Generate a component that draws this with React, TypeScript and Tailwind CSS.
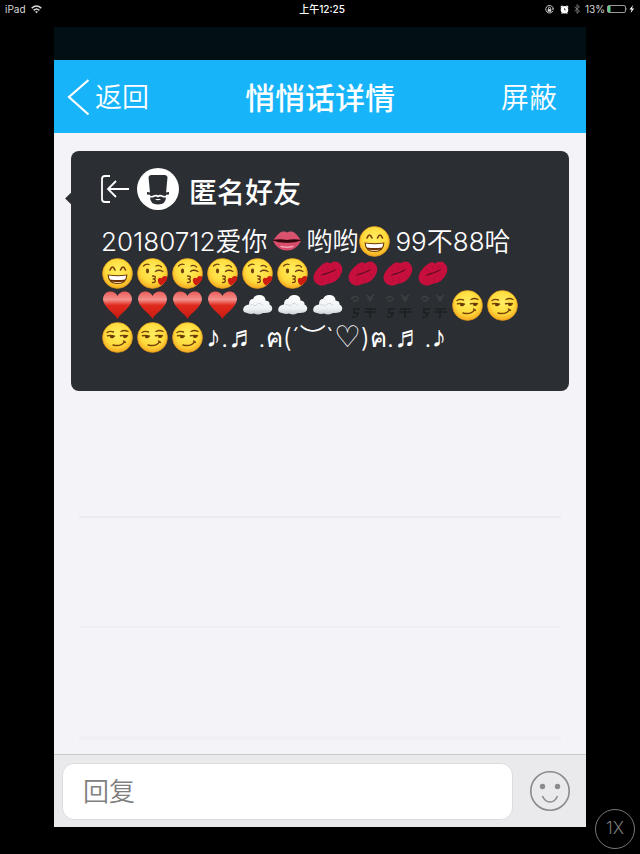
import type { ReactNode } from "react";

type EmojiProps = { label: string; children: ReactNode };

function Emoji({ label, children }: EmojiProps) {
  return (
    <svg role="img" aria-label={label} viewBox="0 0 35 32" className="inline-block h-8 w-[35px] align-top">
      {children}
    </svg>
  );
}

function Face() {
  return <circle cx="16.500" cy="15.500" r="15" fill="url(#face)" stroke="#e49a1a" strokeWidth="0.6" />;
}

function Grin() {
  return (
    <Emoji label="大笑">
      <Face />
      <g fill="none" stroke="#7a3d06" strokeWidth="1.6" strokeLinecap="round">
        <path d="M9 12Q11.500 6 14 12M19.500 12Q22 6 24.500 12" />
      </g>
      <path d="M6.500 16.500Q16.500 18 26.500 16.500Q26 26 16.500 26Q7 26 6.500 16.500Z" fill="#6b3208" />
      <path d="M7.800 17.600Q16.500 19 25.200 17.600Q25 20 24 21.500Q16.500 22.500 9 21.500Q8 20 7.800 17.600Z" fill="#fff" />
      <path d="M10.500 23.500Q16.500 24.500 22.500 23.500Q20 25 16.500 25Q13 25 10.500 23.500Z" fill="#f3d9b0" />
    </Emoji>
  );
}

function BlowKiss() {
  return (
    <Emoji label="飞吻">
      <Face />
      <ellipse cx="11.500" cy="13" rx="1.600" ry="2.400" fill="#70400c" />
      <g fill="none" stroke="#70400c" strokeWidth="1.3" strokeLinecap="round">
        <path d="M7.500 8Q10 5.500 13 6.500M19.500 13.500Q22.500 11 27 13.500M20 8Q23 6.500 25.500 9" />
        <path d="M16.500 18Q20.500 18 19 20.300L17.500 21L19 21.600Q20.500 24.500 16.500 24.500" />
      </g>
      <path d="M25 27.500Q21.500 25 21.800 21.500Q23 18.500 25.500 20.300Q28 16.500 31 18.800Q32.500 23 25 27.500Z" fill="#cb1d12" />
    </Emoji>
  );
}

function Smirk() {
  return (
    <Emoji label="得意">
      <Face />
      <g fill="none" stroke="#754208" strokeWidth="1.4" strokeLinecap="round">
        <path d="M6 10.500Q9 8.500 12.500 10M20 9.500Q23.500 7.500 27 9.500" />
        <path d="M6.500 13.800Q10 13 13.500 14.200M19.500 13.800Q23 13 26.500 13.800" />
        <path d="M12 23Q20 25 23.500 19.800" />
        <path d="M22.500 19L24.500 20.400" />
      </g>
      <ellipse cx="11" cy="14.900" rx="2" ry="1.400" fill="#663606" />
      <ellipse cx="24" cy="14.700" rx="2" ry="1.400" fill="#663606" />
    </Emoji>
  );
}

function Mouth() {
  return (
    <span className="mx-[2px]">
      <Emoji label="嘴">
        <path d="M4 15Q9 6.500 13.500 5.500Q16.500 5 18 6.500Q20 5 23 5.500Q27.500 6.500 32 15Q27 24.500 18 24.500Q8.500 24.500 4 15Z" fill="url(#mouth)" />
        <path d="M3 14.300Q10 12.500 18 14Q26 12.500 33 14.300Q26 17 18 16.800Q10 17 3 14.300Z" fill="#30070d" />
        <path d="M12 20.500Q18 22 24 20.500" fill="none" stroke="#f2a3b4" strokeWidth="1.3" strokeLinecap="round" />
      </Emoji>
    </span>
  );
}

function KissMark() {
  return (
    <Emoji label="唇印">
      <path d="M2.500 19Q3.500 12 12 6Q16 3 19 5.500Q23 2.500 27 4Q32.500 8 31 14Q27 25 16 26Q12 28.500 8 27Q2.500 25 2.500 19Z" fill="#c60f3d" />
      <path d="M9 18Q13 14.500 17.500 14.500Q22 11.500 26 11Q23 13.500 20 14.500Q15 16.500 9 18Z" fill="#5e0d23" />
      <path d="M11 10L13 14M16 8L17.500 13M23 7L22 11M12 20L11 25M18 19L18.500 25M24 16L26 19" fill="none" stroke="#b40e39" strokeWidth="0.800" />
    </Emoji>
  );
}

function Heart() {
  return (
    <Emoji label="红心">
      <path d="M16.500 29C13.500 23 3 18 2 9.500C2 0 13.500-1 16.500 6C19.500-1 31 0 31 9.500C30 18 19.500 23 16.500 29Z" fill="url(#heart)" />
    </Emoji>
  );
}

function Cloud() {
  return (
    <Emoji label="云">
      <path d="M6 23Q1 22.500 2.500 18Q3.500 15 8 14.500Q8 9 12 9Q14 4.500 19 5Q24.500 5.500 24.500 10.500Q29 11 28.500 14.500Q32 16 31 20Q29.500 23.500 22 23Q18 25.500 13 23.500Q10 24.500 6 23Z" fill="url(#cloud)" />
      <path d="M9 15Q12 13.500 14 16Q18 11 22 15.500" fill="none" stroke="#d3d9df" strokeWidth="1" />
    </Emoji>
  );
}

function Symbols() {
  return (
    <Emoji label="符号">
      <g fill="none" stroke="#404447" strokeWidth="1.2">
        <path d="M5 9L9 6L13 9M7 10Q9 12 12 10M20 5L24 8L28 5M21 9H27M24 8V12" />
      </g>
      <g fill="none" stroke="#1e2023" strokeWidth="1.700">
        <path d="M7 19H14M8 19V23H12L10 27M6 27H9M19 19H30M18 22H31M24 19V28" />
      </g>
    </Emoji>
  );
}

function Note({ children }: { children: ReactNode }) {
  return <span className="font-['DejaVu_Sans',sans-serif] text-[30px] leading-none">{children}</span>;
}

function times(count: number, render: (key: number) => ReactNode) {
  return Array.from({ length: count }, (_, i) => render(i));
}

function StatusBar() {
  return (
    <div className="grid h-[27px] grid-cols-3 items-start px-[5px] pt-[2px] text-[10px] leading-[14px] text-[#d8d8d8]">
      <div className="flex items-center gap-[5px]">
        <span>iPad</span>
        <svg viewBox="0 0 12 10" className="h-[9px] w-[11px]" fill="none" stroke="currentColor" strokeWidth="1.7" aria-label="Wi-Fi">
          <path d="M0.700 3.500Q6-1.200 11.300 3.500M2.800 5.900Q6 3 9.200 5.900" />
          <path d="M4.400 7.500Q6 6 7.600 7.500L6 9.300Z" fill="currentColor" stroke="none" />
        </svg>
      </div>
      <span className="pl-1 text-center font-medium text-white">上午12:25</span>
      <div className="flex items-center justify-end">
        <svg viewBox="0 0 10 10" className="mr-[6px] size-[9px]" fill="none" stroke="currentColor" aria-label="方向锁定">
          <path d="M8.800 6.500A4.200 4.200 0 1 1 9.200 4.500M7.800 4.200L9.200 5L10 3.700" />
          <path d="M3 4.600H7V7.500H3Z" fill="currentColor" stroke="none" />
          <path d="M3.900 4.600V3.600A1.100 1.100 0 0 1 6.100 3.600V4.600" />
        </svg>
        <svg viewBox="0 0 10 10" className="mr-[4px] size-[9px]" aria-label="闹钟">
          <circle cx="5" cy="5.200" r="4.200" fill="#fff" />
          <path d="M0.800 2.600L2.800 0.800M9.200 2.600L7.200 0.800M1.800 9.500L2.800 8.500M8.200 9.500L7.200 8.500" stroke="#fff" strokeWidth="1.300" />
          <path d="M5 3.400V5.400H6.800" fill="none" stroke="#333" strokeWidth="0.800" />
        </svg>
        <svg viewBox="0 0 8 10" className="mr-[4px] h-[10px] w-[8px]" fill="none" stroke="#777" aria-label="蓝牙">
          <path d="M1.500 2.800L6.500 7.200L4 9.300V0.700L6.500 2.800L1.500 7.200" />
        </svg>
        <span>13%</span>
        <svg viewBox="0 0 28 10" className="ml-[2px] h-[10px] w-[28px]" aria-label="电池">
          <rect x="0.500" y="1.500" width="18" height="7" rx="1.500" fill="none" stroke="#999" />
          <rect x="1" y="2" width="2.500" height="6" fill="#5fc98a" />
          <path d="M19.500 3.700Q21 5 19.500 6.300Z" fill="#aaa" />
          <path d="M26 1L22.500 5.600H24.600L23.600 9L27.200 4.400H25Z" fill="#fff" />
        </svg>
      </div>
    </div>
  );
}

function Header() {
  return (
    <header className="flex h-[73px] items-center justify-between bg-[#18b4fa] pt-[2px] pr-[29px] pl-[13px] text-white">
      <button type="button" className="flex flex-1 items-center gap-1 text-[27px] leading-8 font-[350]">
        <svg viewBox="0 0 24 38" className="h-[38px] w-6" fill="none" stroke="currentColor" strokeWidth="2.200" aria-hidden="true">
          <path d="M21.500 1L2 18L21.500 35.500" />
        </svg>
        返回
      </button>
      <h1 className="pl-4 text-[30px] leading-8 font-medium">悄悄话详情</h1>
      <button type="button" className="flex-1 text-right text-[28px] leading-8 font-[350]">屏蔽</button>
    </header>
  );
}

function Message() {
  return (
    <article className="relative min-h-[240px] rounded-lg bg-[#2b2e33] px-[30px] pt-4 text-white">
      <span className="absolute top-[43px] -left-[4px] size-[9px] rotate-45 bg-[#2b2e33]" />
      <div className="flex h-11 items-center">
        <svg viewBox="0 0 29 28" className="mr-[7px] h-7 w-[29px]" fill="none" stroke="currentColor" strokeWidth="1.800" aria-hidden="true">
          <path d="M9 1H4Q1 1 1 4V24Q1 27 4 27H9M28 14H8M15 6L7 14L15 22" />
        </svg>
        <svg viewBox="0 0 42 42" className="mr-[10px] size-[42px]" role="img" aria-label="匿名头像">
          <circle cx="21" cy="21" r="21" fill="#fff" />
          <path d="M11.500 9Q12 7 14.500 7H27.500Q30 7 30.500 9L29 25H13Z" fill="#2b2e33" />
          <path d="M10 24Q21 26 32 24V26.500Q21 28 10 26.500Z" fill="#2b2e33" />
          <path d="M13 25H29V29Q29 36.500 21 36.500Q13 36.500 13 29Z" fill="#2b2e33" />
          <path d="M12 28Q14.500 29.500 17 28Q19.500 27 21 28.500Q22.500 27 25 28Q27.500 29.500 30 28" fill="none" stroke="#fff" strokeWidth="1.600" />
          <path d="M18 31H24Q21 33.500 18 31Z" fill="#fff" />
        </svg>
        <h2 className="pt-2 text-[28px] leading-9 font-medium">匿名好友</h2>
      </div>
      <p className="pt-[15px] text-[26px] leading-8 font-[350] whitespace-nowrap">
        20180712爱你<Mouth />哟哟<Grin /><span className="pl-[2px]">99不88哈</span>
        <br />
        <Grin />
        {times(5, (i) => <BlowKiss key={i} />)}
        {times(4, (i) => <KissMark key={i} />)}
        <br />
        {times(4, (i) => <Heart key={i} />)}
        {times(3, (i) => <Cloud key={i} />)}
        {times(3, (i) => <Symbols key={i} />)}
        {times(2, (i) => <Smirk key={i} />)}
        <br />
        {times(3, (i) => <Smirk key={i} />)}
        <Note>♪</Note>.<Note>♬</Note>.ฅ(´︶`<Note>♡</Note>)ฅ.<Note>♬</Note>.<Note>♪</Note>
      </p>
    </article>
  );
}

function ReplyBar() {
  return (
    <form className="flex h-[73px] items-center gap-4 border-t border-[#c9c9cc] bg-[#eaeaec] pr-[15px] pl-2">
      <input
        type="text"
        aria-label="回复"
        placeholder="回复"
        className="h-[57px] min-w-0 flex-1 rounded-xl border border-[#dcdcde] bg-white px-5 text-[26px] font-[350] text-[#333] placeholder:text-[#808080]"
      />
      <button type="button" aria-label="表情">
        <svg viewBox="0 0 42 42" className="size-[42px]" fill="none" stroke="#8b8b8e" strokeWidth="1.600">
          <circle cx="21" cy="21" r="19.200" />
          <circle cx="13.500" cy="16.500" r="2.700" fill="#8b8b8e" stroke="none" />
          <circle cx="28.500" cy="16.500" r="2.700" fill="#8b8b8e" stroke="none" />
          <path d="M13.500 26Q16 32 21 32Q26 32 28.500 26" />
        </svg>
      </button>
    </form>
  );
}

export default function App() {
  return (
    <div className="relative flex min-h-screen flex-col bg-black pb-[27px] font-[Inter,'Noto_Sans_CJK_SC','DejaVu_Sans',sans-serif]">
      <svg className="absolute size-0" aria-hidden="true">
        <defs>
          <radialGradient id="face" cx="0.5" cy="0.4" r="0.6">
            <stop offset="0" stopColor="#ffee62" />
            <stop offset="0.65" stopColor="#ffdb3c" />
            <stop offset="1" stopColor="#f3a821" />
          </radialGradient>
          <linearGradient id="heart" x1="0" y1="0" x2="0" y2="1">
            <stop offset="0" stopColor="#ea5a58" />
            <stop offset="0.3" stopColor="#f2918c" />
            <stop offset="0.5" stopColor="#e02a1e" />
            <stop offset="1" stopColor="#c91a10" />
          </linearGradient>
          <linearGradient id="cloud" x1="0" y1="0" x2="0" y2="1">
            <stop offset="0" stopColor="#ffffff" />
            <stop offset="0.7" stopColor="#eef1f4" />
            <stop offset="1" stopColor="#cbd1d8" />
          </linearGradient>
          <linearGradient id="mouth" x1="0" y1="0" x2="0" y2="1">
            <stop offset="0" stopColor="#d8566f" />
            <stop offset="1" stopColor="#d9486a" />
          </linearGradient>
        </defs>
      </svg>
      <StatusBar />
      <div className="mx-[54px] flex flex-1 flex-col bg-[#f4f4f8]">
        <div className="h-[33px] bg-[#021015]" />
        <Header />
        <main className="flex flex-1 flex-col px-[17px] pt-[18px]">
          <Message />
          <div className="flex flex-col px-2 pt-4">
            <div className="h-[111px] border-b-2 border-[#ebebef]" />
            <div className="h-[110px] border-b-2 border-[#efeff3]" />
            <div className="h-[112px] border-b-4 border-[#f0f0f4]" />
          </div>
        </main>
        <ReplyBar />
      </div>
      <button
        type="button"
        className="absolute right-[5px] bottom-[5px] size-10 rounded-full border border-[#777] text-[17px] font-light text-[#777]"
      >
        1X
      </button>
    </div>
  );
}
